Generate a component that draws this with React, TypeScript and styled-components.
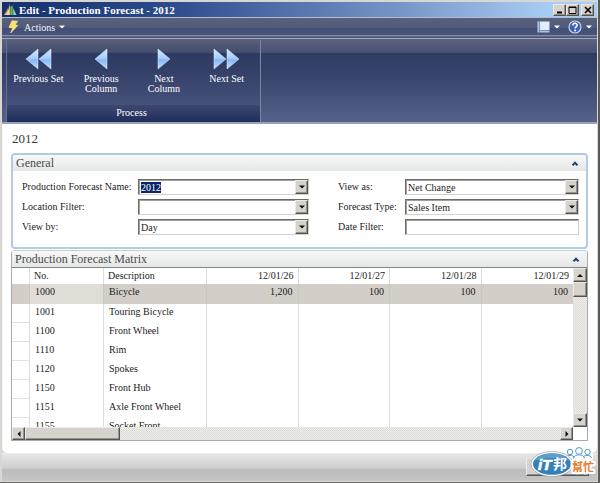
import React, { useEffect, useRef } from "react";
import styled, { createGlobalStyle, css } from "styled-components";

const GlobalStyle = createGlobalStyle`
  *, *::before, *::after { box-sizing: border-box; }
  body { margin: 0; background: #fff; }
  body, button, input, select {
    font-family: "Liberation Serif", "Times New Roman", "Noto Sans CJK TC", serif;
    font-size: 10px;
    color: #1c1c1c;
  }
  button { padding: 0; border: 0; background: none; }
`;

const raised = css`
  background: #d6d3cc;
  border: 1px solid;
  border-color: #eceae6 #55534f #55534f #eceae6;
  box-shadow: inset -1px -1px 0 #96938d;
`;

const Window = styled.main`
  position: relative;
  display: flex;
  flex-direction: column;
  height: 100vh;
  padding: 2px 1px 1px 2px;
  background: #d8d7d3;
  border-right: 2px solid #5a5955;
  border-bottom: 1px solid #6b6a66;
`;

const TitleBar = styled.header`
  display: flex;
  align-items: center;
  gap: 2px;
  height: 15px;
  padding: 0 3px 0 2px;
  background: linear-gradient(90deg, #15306b, #2b4b8c 28%, #7395c6 66%, #a8cdf3 92%);
`;

const Title = styled.h1`
  flex: 1;
  margin: 0;
  font-size: 11px;
  line-height: 14px;
  color: #fff;
`;

const WindowButtons = styled.div`
  display: flex;
`;

const WindowButton = styled.button<{ $apart?: boolean }>`
  ${raised}
  width: 13px;
  height: 12px;
  margin-left: ${(p) => (p.$apart ? 2 : 0)}px;
  display: grid;
  place-items: center;
`;

const MenuBar = styled.nav`
  display: flex;
  align-items: center;
  gap: 8px;
  height: 22px;
  padding: 0 5px 2px 6px;
  border-top: 1px solid #b5bccd;
  border-bottom: 1px solid #a3a9bc;
  background: linear-gradient(#58627c, #515b78 50%, #434e76 51%, #4a557e 85%, #8f97ad 88%, #4a557c 94%);
`;

const MenuButton = styled.button<{ $push?: boolean }>`
  display: flex;
  align-items: center;
  gap: 4px;
  height: 18px;
  color: #f4f6fa;
  font-size: 10px;
  margin-left: ${(p) => (p.$push ? "auto" : "0")};
`;

const Ribbon = styled.section`
  flex: none;
  padding-left: 4px;
  border-bottom: 2px solid #97a1b8;
  background: linear-gradient(#5b637e, #485273 14px, #2f3c62 14px, #35426a 34px, #56628a);
`;

const RibbonGroup = styled.div`
  display: flex;
  flex-direction: column;
  width: 255px;
  margin-top: 1px;
  border-left: 1px solid #68718d;
  border-right: 1px solid #7c86a3;
  background: linear-gradient(rgba(85, 93, 120, 0.5), rgba(60, 70, 102, 0.5) 13px, rgba(43, 55, 94, 0.6) 13px, rgba(72, 85, 127, 0.6));
`;

const RibbonItems = styled.div`
  display: grid;
  grid-template-columns: repeat(4, 1fr);
  height: 65px;
  padding: 8px 2px 0 0;
`;

const RibbonButton = styled.button`
  display: flex;
  flex-direction: column;
  align-items: center;
  justify-content: flex-start;
  gap: 4px;
  color: #fff;
  line-height: 10px;
  white-space: pre;
`;

const RibbonCaption = styled.div`
  height: 17px;
  padding-right: 4px;
  line-height: 15px;
  text-align: center;
  color: #fff;
  background: linear-gradient(#3c486f, #1f2d5b);
`;

const Content = styled.div`
  flex: 1;
  min-height: 0;
  display: flex;
  flex-direction: column;
  padding: 7px 9px 12px 9px;
  background: #fff;
  border-radius: 0 0 5px 5px;
  border-left: 1px solid #f4f4f2;
`;

const PageTitle = styled.h2`
  margin: 0 0 7px;
  font-size: 13px;
  font-weight: 400;
  line-height: 15px;
  color: #3a3a3a;
`;

const GeneralPanel = styled.section`
  flex: none;
  margin-left: -1px;
  border: 2px solid #b3cbe6;
  border-radius: 4px;
`;

const PanelHeader = styled.div`
  display: flex;
  align-items: center;
  justify-content: space-between;
  height: 16px;
  padding: 0 6px 0 3px;
  background: linear-gradient(#f8f8f8, #e5e7e7);
  border-radius: 3px 3px 0 0;
`;

const PanelTitle = styled.h3`
  margin: 0;
  font-size: 12px;
  font-weight: 400;
  line-height: 15px;
  color: #4a4a4a;
`;

const CollapseButton = styled.button`
  display: grid;
  place-items: center;
  width: 10px;
  height: 10px;
`;

const FieldGrid = styled.div`
  display: grid;
  grid-template-columns: 116px 171fr 96px 174fr;
  row-gap: 4px;
  padding: 8px 7px 12px 9px;
`;

const Label = styled.label<{ $second?: boolean }>`
  line-height: 15px;
  padding-left: ${(p) => (p.$second ? 29 : 0)}px;
  white-space: nowrap;
`;

const Field = styled.div`
  display: grid;
  grid-template-columns: 1fr 13px;
  height: 16px;
  border: 1px solid;
  border-color: #6c6b69 #d4d2cd #d4d2cd #6c6b69;
  box-shadow: inset 1px 1px 0 #a09f9c;
  background: #fff;
`;

const controlText = css`
  grid-row: 1;
  min-width: 0;
  width: 100%;
  height: 14px;
  padding: 0 0 0 2px;
  border: 0;
  outline: 0;
  background: transparent;
  line-height: 13px;
  font-size: 10px;
`;

const TextInput = styled.input<{ $wide?: boolean }>`
  ${controlText}
  grid-column: ${(p) => (p.$wide ? "1 / 3" : "1")};
  caret-color: transparent;
  &::selection { background: #0a246a; color: #fff; }
`;

const Select = styled.select`
  ${controlText}
  grid-column: 1 / 3;
  appearance: none;
`;

const DropButton = styled.button`
  ${raised}
  grid-row: 1;
  grid-column: 2;
  display: grid;
  place-items: center;
`;

const DropMark = styled.span`
  ${raised}
  grid-row: 1;
  grid-column: 2;
  display: grid;
  place-items: center;
  pointer-events: none;
`;

const MatrixPanel = styled.section`
  flex: 1;
  min-height: 0;
  display: flex;
  flex-direction: column;
  margin: 1px 0 0 -1px;
  border: 1px solid #a7a9ab;
  border-top-color: #c5cdd6;
  border-radius: 4px 4px 0 0;
`;

const ScrollFrame = styled.div`
  flex: 1;
  min-height: 0;
  display: grid;
  grid-template-columns: 1fr 14px;
  grid-template-rows: minmax(0, 1fr) 13px;
  border-top: 1px solid #838383;
`;

const Viewport = styled.div`
  overflow: hidden;
`;

const Table = styled.table`
  width: 100%;
  border-collapse: separate;
  border-spacing: 0;
  table-layout: fixed;
`;

const Col = styled.col<{ $w?: number }>`
  width: ${(p) => (p.$w ? p.$w + "px" : "auto")};
`;

const cell = css<{ $num?: boolean }>`
  padding: 0 5px;
  border-right: 1px solid #d9dde0;
  font-weight: 400;
  text-align: ${(p) => (p.$num ? "right" : "left")};
  white-space: nowrap;
  overflow: hidden;
  &:last-child { border-right: 0; }
`;

const HeadCell = styled.th<{ $num?: boolean }>`
  ${cell}
  height: 16px;
  line-height: 16px;
  padding: 0 4px;
`;

const BodyCell = styled.td<{ $num?: boolean }>`
  ${cell}
  height: inherit;
  line-height: 16px;
  vertical-align: top;
  &:first-child { border-bottom: 1px solid #e2e2e2; }
`;

const Row = styled.tr<{ $current?: boolean }>`
  height: ${(p) => (p.$current ? 20 : 19)}px;
  background: ${(p) => (p.$current ? "#d3cfc8" : "transparent")};
  td { border-right-color: ${(p) => (p.$current ? "#cac7c0" : "#d9dde0")}; }
  td:first-child { border-bottom-color: ${(p) => (p.$current ? "#d3cfc8" : "#e2e2e2")}; }
  td:nth-child(2) { background: ${(p) => (p.$current ? "#e0ddd7" : "transparent")}; }
`;

const ScrollBar = styled.div<{ $vertical?: boolean }>`
  display: flex;
  flex-direction: ${(p) => (p.$vertical ? "column" : "row")};
  background: repeating-conic-gradient(#dedcd8 0 25%, #efeeeb 0 50%) 0 0 / 2px 2px;
`;

const ScrollButton = styled.button<{ $end?: boolean }>`
  ${raised}
  flex: none;
  width: 13px;
  height: 13px;
  display: grid;
  place-items: center;
  ${(p) => p.$end && "margin-left: auto;"}
`;

const VScrollButton = styled(ScrollButton)`
  width: 14px;
  height: 14px;
  margin-left: 0;
  ${(p) => p.$end && "margin-top: auto;"}
`;

const Thumb = styled.div<{ $vertical?: boolean }>`
  ${raised}
  flex: none;
  ${(p) => (p.$vertical ? "height: 15px;" : "width: 17%;")}
`;

const Footer = styled.footer`
  flex: none;
  display: flex;
  justify-content: flex-end;
  align-items: center;
  height: 28px;
  padding: 0 8px 1px 8px;
  border-top: 1px solid #ececec;
  background: linear-gradient(#e6e6e6, #cfcfcf 50%, #bcbcbc 60%, #c6c6c6);
`;

const FooterButton = styled.button`
  ${raised}
  width: 63px;
  height: 18px;
`;

const Watermark = styled.svg`
  position: absolute;
  right: 0;
  bottom: 0;
`;

type Dir = "up" | "down" | "left" | "right";
const triangles: Record<Dir, string> = {
  up: "M0 5 L3 2 L6 5 Z",
  down: "M0 1.5 H6 L3 4.5 Z",
  left: "M4.5 0 V6 L1.5 3 Z",
  right: "M1.5 0 V6 L4.5 3 Z",
};

const Triangle = ({ dir, color = "#111" }: { dir: Dir; color?: string }) => (
  <svg width="6" height="6" viewBox="0 0 6 6" aria-hidden="true">
    <path d={triangles[dir]} fill={color} />
  </svg>
);

const Chevron = () => (
  <svg width="8" height="7" viewBox="0 0 8 7" aria-hidden="true">
    <path d="M1.5 5.4 L4 2.8 L6.5 5.4" fill="none" stroke="#1f3f80" strokeWidth="2" />
  </svg>
);

const RibbonArrow = ({ back, double }: { back?: boolean; double?: boolean }) => {
  const w = double ? 27 : 14;
  return (
    <svg width={w} height="22" viewBox={`0 0 ${w} 22`} aria-hidden="true">
      <defs>
        <linearGradient id="arrowFill" x1="0" y1="0" x2="0" y2="1">
          <stop offset="0" stopColor="#d3e8ff" />
          <stop offset="0.45" stopColor="#a9cffc" />
          <stop offset="0.55" stopColor="#86b8f6" />
          <stop offset="1" stopColor="#c4defb" />
        </linearGradient>
      </defs>
      <g fill="url(#arrowFill)" stroke="#dcecff" strokeWidth="0.5">
        {back ? <path d="M13 1 V21 L1 11 Z" /> : <path d="M1 1 V21 L13 11 Z" />}
        {double && (back ? <path d="M26 1 V21 L14 11 Z" /> : <path d="M14 1 V21 L26 11 Z" />)}
      </g>
    </svg>
  );
};

const AppIcon = () => (
  <svg width="13" height="13" viewBox="0 0 13 13" aria-hidden="true">
    <path d="M0 12 L4 5 V12 Z" fill="#d98a4a" />
    <path d="M3 12 L5.8 0.5 V12 Z" fill="#f0d65c" />
    <path d="M6.2 12 V4 L8.8 2.5 V12 Z" fill="#5fae6a" />
    <path d="M9.200 12 V5 L12.500 12 Z" fill="#8fd0a8" />
    <path d="M0.5 12 L5 7 L5.5 12 Z" fill="#f7efc0" opacity="0.6" />
  </svg>
);

const BoltIcon = () => (
  <svg width="12" height="14" viewBox="0 0 12 14" aria-hidden="true">
    <path d="M4 0.8 L9.6 1.2 L7 5 L9.8 5.4 L2.6 13 L4.8 8 L1 7.4 Z" fill="#fbe06a" stroke="#fff3b0" strokeWidth="0.6" />
  </svg>
);

const LayoutIcon = () => (
  <svg width="13" height="12" viewBox="0 0 13 12" aria-hidden="true">
    <rect x="0.5" y="0.5" width="2" height="11" fill="#a9c8f0" />
    <rect x="3" y="0.5" width="9.5" height="8.5" fill="#e2edfb" />
    <rect x="3" y="9.5" width="9.5" height="2" fill="#a9c8f0" />
  </svg>
);

const HelpIcon = () => (
  <svg width="14" height="14" viewBox="0 0 14 14" aria-hidden="true">
    <circle cx="7" cy="7" r="6" fill="#3b62b4" stroke="#c9d3e8" strokeWidth="1.2" />
    <path d="M4.9 5.4 C4.9 2.6 9.2 2.7 9.2 5.2 C9.2 6.8 7.1 6.7 7.1 8.6" fill="none" stroke="#fff" strokeWidth="1.6" />
    <circle cx="7.1" cy="10.6" r="1" fill="#fff" />
  </svg>
);

const Logo = () => (
  <Watermark width="68" height="38" viewBox="0 0 68 38" role="img" aria-label="iT邦幫忙">
    <g stroke="#fff" strokeWidth="4" fill="#fff" strokeLinejoin="round">
      <circle cx="40" cy="8" r="3" />
      <circle cx="49" cy="7" r="4" />
      <circle cx="57" cy="8" r="3" />
      <path d="M37 14 H61 V11 H37 Z" />
    </g>
    <g fill="#fff" stroke="#4e9acb" strokeWidth="1">
      <path d="M35.5 14 C36 10.5 44 10.5 44.5 14" />
      <path d="M53 14 C53.5 10.5 61 10.5 61.5 14" />
      <circle cx="40" cy="8" r="2.7" />
      <circle cx="57.5" cy="8" r="2.7" />
      <path d="M43.5 14.5 C44 9.5 54 9.5 54.5 14.5" />
      <circle cx="49" cy="7" r="3.4" />
    </g>
    <ellipse cx="22" cy="20" rx="21" ry="12.5" fill="#fff" stroke="#999" strokeWidth="0.7" />
    <ellipse cx="22" cy="20" rx="19" ry="10.8" fill="#3580b8" />
    <path d="M4 17 C10 7 34 7 40 17 C29 13 15 13 4 17 Z" fill="#5f9fcc" />
    <g fontFamily='"Liberation Sans", "Noto Sans CJK TC", sans-serif' fontWeight="700">
      <text x="8" y="26" fontSize="15" fontStyle="italic" fill="#fff" stroke="#fff" strokeWidth="0.7">iT</text>
      <text x="23" y="25" fontSize="14" fill="#fff" fontFamily='"Noto Sans CJK TC", sans-serif'>邦</text>
      <text x="42" y="27" fontSize="11" fill="#e8792c" stroke="#fff" strokeWidth="4" strokeLinejoin="round" paintOrder="stroke" fontFamily='"Noto Sans CJK TC", sans-serif'>幫忙</text>
    </g>
  </Watermark>
);

const rows: [string, string, string[]][] = [
  ["1000", "Bicycle", ["1,200", "100", "100", "100"]],
  ["1001", "Touring Bicycle", []],
  ["1100", "Front Wheel", []],
  ["1110", "Rim", []],
  ["1120", "Spokes", []],
  ["1150", "Front Hub", []],
  ["1151", "Axle Front Wheel", []],
  ["1155", "Socket Front", []],
];
const dates = ["12/01/26", "12/01/27", "12/01/28", "12/01/29"];

const PickList = ({ id, value }: { id: string; value: string }) => (
  <Field>
    <Select id={id} defaultValue={value}>
      <option>{value}</option>
    </Select>
    <DropMark><Triangle dir="down" /></DropMark>
  </Field>
);

export default function App() {
  const nameRef = useRef<HTMLInputElement>(null);
  useEffect(() => {
    nameRef.current?.focus();
    nameRef.current?.select();
  }, []);

  return (
    <>
      <GlobalStyle />
      <Window>
        <TitleBar>
          <AppIcon />
          <Title>Edit - Production Forecast - 2012</Title>
          <WindowButtons>
            <WindowButton aria-label="Minimize">
              <svg width="8" height="8" viewBox="0 0 8 8"><path d="M1 6.5 H6" stroke="#000" strokeWidth="2" /></svg>
            </WindowButton>
            <WindowButton aria-label="Maximize">
              <svg width="9" height="8" viewBox="0 0 9 8"><path d="M1 1 H8 V7.5 H1 Z M1 1.5 H8" fill="none" stroke="#000" /></svg>
            </WindowButton>
            <WindowButton $apart aria-label="Close">
              <svg width="8" height="8" viewBox="0 0 8 8"><path d="M1 1 L7 7 M7 1 L1 7" stroke="#000" strokeWidth="1.6" /></svg>
            </WindowButton>
          </WindowButtons>
        </TitleBar>

        <MenuBar>
          <MenuButton>
            <BoltIcon />
            Actions
            <Triangle dir="down" color="#fff" />
          </MenuButton>
          <MenuButton $push aria-label="Layout">
            <LayoutIcon />
            <Triangle dir="down" color="#fff" />
          </MenuButton>
          <MenuButton aria-label="Help">
            <HelpIcon />
            <Triangle dir="down" color="#fff" />
          </MenuButton>
        </MenuBar>

        <Ribbon>
          <RibbonGroup>
            <RibbonItems>
              <RibbonButton><RibbonArrow back double />Previous Set</RibbonButton>
              <RibbonButton><RibbonArrow back />{"Previous\nColumn"}</RibbonButton>
              <RibbonButton><RibbonArrow />{"Next\nColumn"}</RibbonButton>
              <RibbonButton><RibbonArrow double />Next Set</RibbonButton>
            </RibbonItems>
            <RibbonCaption>Process</RibbonCaption>
          </RibbonGroup>
        </Ribbon>

        <Content>
          <PageTitle>2012</PageTitle>
          <GeneralPanel>
            <PanelHeader>
              <PanelTitle>General</PanelTitle>
              <CollapseButton aria-label="Collapse General"><Chevron /></CollapseButton>
            </PanelHeader>
            <FieldGrid>
              <Label htmlFor="name">Production Forecast Name:</Label>
              <Field>
                <TextInput ref={nameRef} id="name" defaultValue="2012" />
                <DropButton aria-label="Choose forecast"><Triangle dir="down" /></DropButton>
              </Field>
              <Label $second htmlFor="viewAs">View as:</Label>
              <PickList id="viewAs" value="Net Change" />

              <Label htmlFor="location">Location Filter:</Label>
              <Field>
                <TextInput id="location" />
                <DropButton aria-label="Choose location"><Triangle dir="down" /></DropButton>
              </Field>
              <Label $second htmlFor="type">Forecast Type:</Label>
              <PickList id="type" value="Sales Item" />

              <Label htmlFor="viewBy">View by:</Label>
              <PickList id="viewBy" value="Day" />
              <Label $second htmlFor="dateFilter">Date Filter:</Label>
              <Field><TextInput $wide id="dateFilter" /></Field>
            </FieldGrid>
          </GeneralPanel>

          <MatrixPanel>
            <PanelHeader>
              <PanelTitle>Production Forecast Matrix</PanelTitle>
              <CollapseButton aria-label="Collapse matrix"><Chevron /></CollapseButton>
            </PanelHeader>
            <ScrollFrame>
              <Viewport>
                <Table>
                  <colgroup>
                    <Col $w={18} />
                    <Col $w={74} />
                    <Col $w={103} />
                    {dates.map((d) => <Col key={d} />)}
                  </colgroup>
                  <thead>
                    <tr>
                      <HeadCell />
                      <HeadCell>No.</HeadCell>
                      <HeadCell>Description</HeadCell>
                      {dates.map((d) => <HeadCell key={d} $num>{d}</HeadCell>)}
                    </tr>
                  </thead>
                  <tbody>
                    {rows.map(([no, text, values], i) => (
                      <Row key={no} $current={i === 0}>
                        <BodyCell />
                        <BodyCell>{no}</BodyCell>
                        <BodyCell>{text}</BodyCell>
                        {dates.map((d, k) => <BodyCell key={d} $num>{values[k]}</BodyCell>)}
                      </Row>
                    ))}
                  </tbody>
                </Table>
              </Viewport>
              <ScrollBar $vertical>
                <VScrollButton aria-label="Scroll up"><Triangle dir="up" /></VScrollButton>
                <Thumb $vertical />
                <VScrollButton $end aria-label="Scroll down"><Triangle dir="down" /></VScrollButton>
              </ScrollBar>
              <ScrollBar>
                <ScrollButton aria-label="Scroll left"><Triangle dir="left" /></ScrollButton>
                <Thumb />
                <ScrollButton $end aria-label="Scroll right"><Triangle dir="right" /></ScrollButton>
              </ScrollBar>
            </ScrollFrame>
          </MatrixPanel>
        </Content>

        <Footer>
          <FooterButton aria-label="OK" />
        </Footer>
        <Logo />
      </Window>
    </>
  );
}
